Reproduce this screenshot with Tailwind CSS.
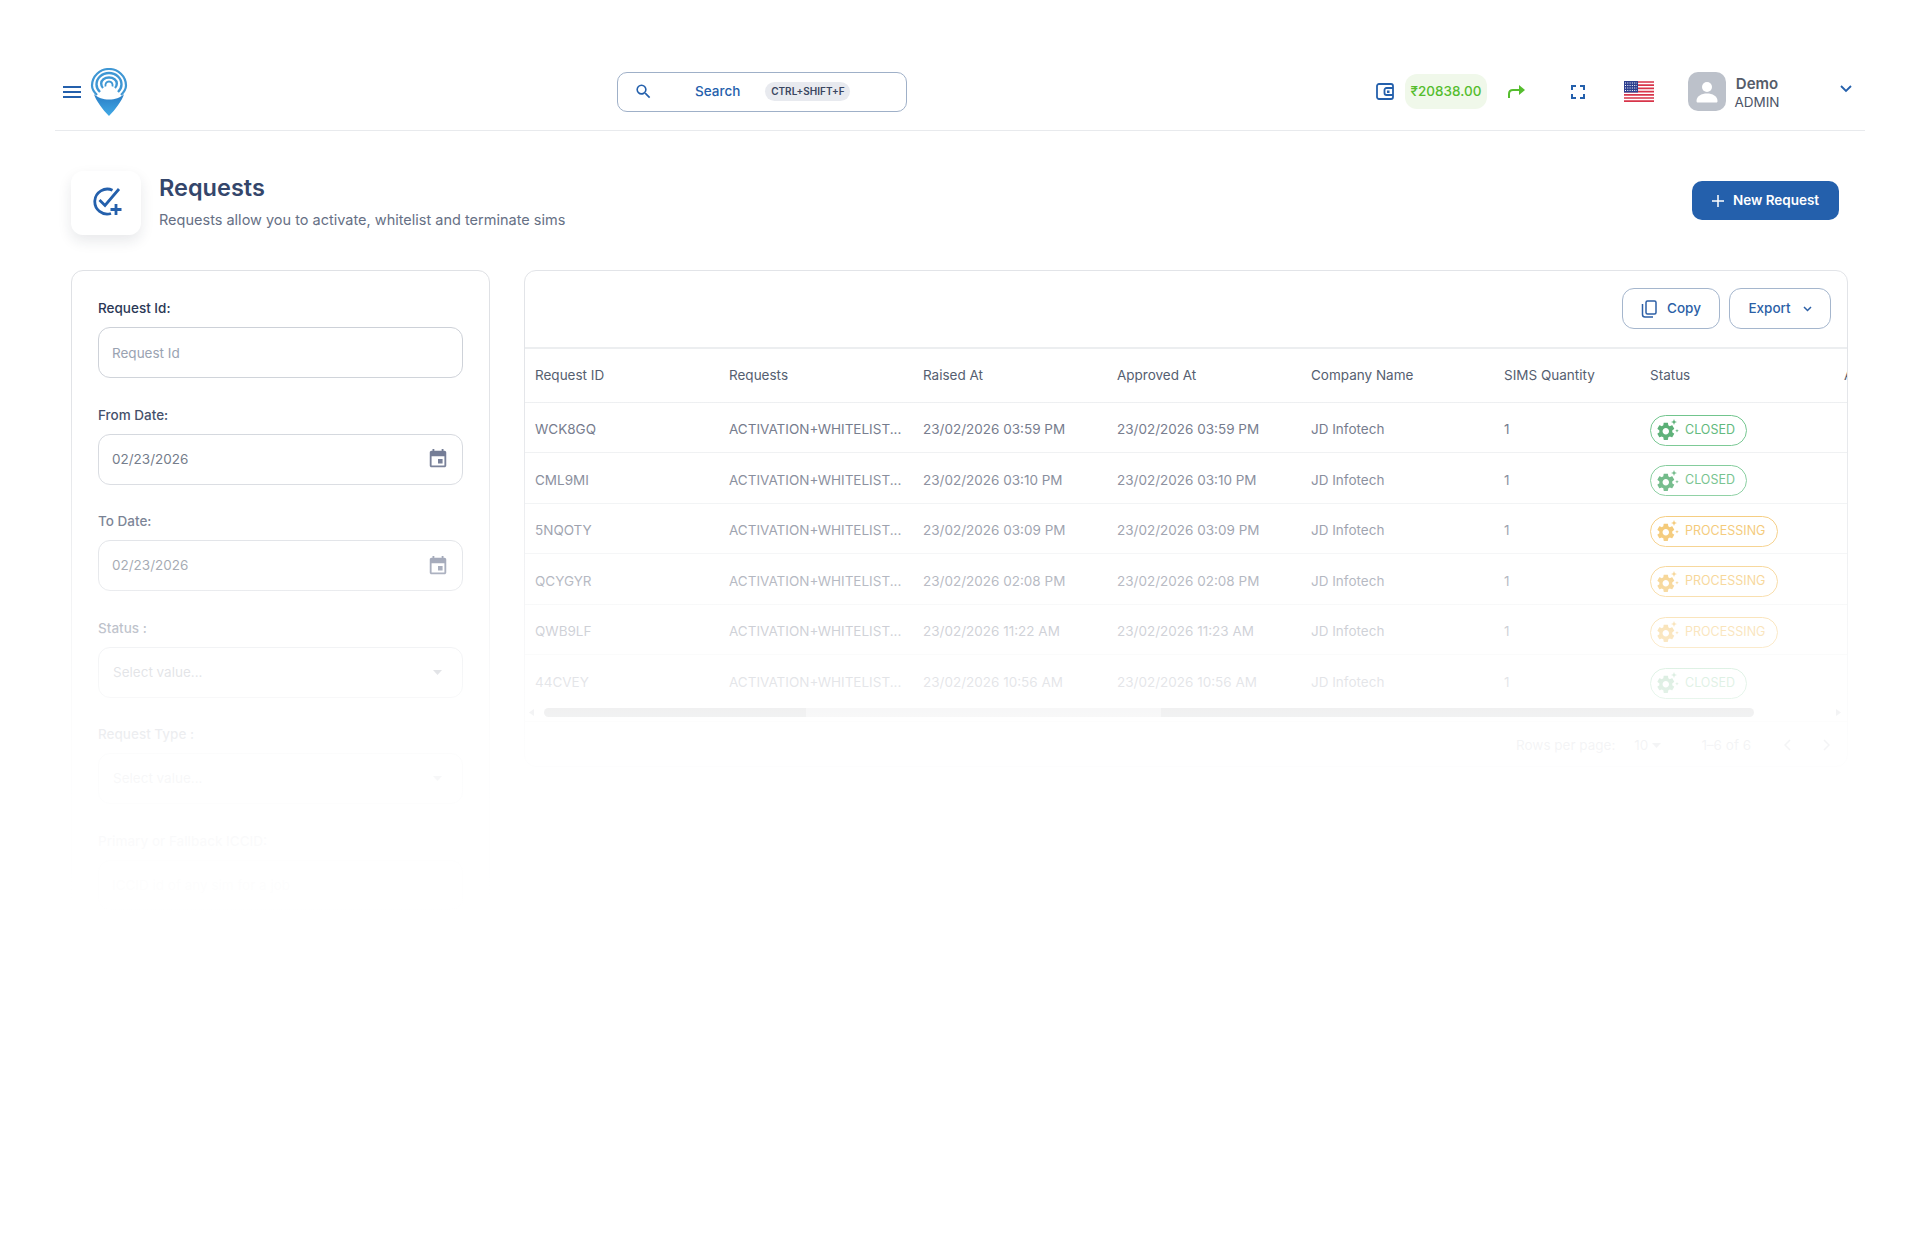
<!DOCTYPE html>
<html lang="en">
<head>
    <meta charset="UTF-8">
    <meta name="viewport" content="width=device-width, initial-scale=1.0">
    <title>Requests</title>
    <script src="https://cdn.jsdelivr.net/npm/@tailwindcss/browser@4"></script>
</head>
<body class="bg-white [font-family:Inter,sans-serif]">
    <svg class="hidden">
        <symbol id="gear" viewBox="0 0 24 24">
            <g transform="translate(0 2.500) scale(0.9)">
                <path fill="currentColor" d="M19.14 12.94c.04-.3.06-.61.06-.94 0-.32-.02-.64-.07-.94l2.03-1.58c.18-.14.23-.41.12-.61l-1.92-3.32c-.12-.22-.37-.29-.59-.22l-2.39.96c-.5-.38-1.03-.7-1.62-.94l-.36-2.54c-.04-.24-.24-.41-.48-.41h-3.84c-.24 0-.43.17-.47.41l-.36 2.54c-.59.24-1.13.57-1.62.94l-2.39-.96c-.22-.08-.47 0-.59.22L2.74 8.87c-.12.21-.08.47.12.61l2.03 1.58c-.05.3-.09.63-.09.94s.02.64.07.94l-2.03 1.58c-.18.14-.23.41-.12.61l1.92 3.32c.12.22.37.29.59.22l2.39-.96c.5.38 1.03.7 1.62.94l.36 2.54c.05.24.24.41.48.41h3.84c.24 0 .44-.17.47-.41l.36-2.54c.59-.24 1.13-.56 1.62-.94l2.39.96c.22.08.47 0 .59-.22l1.92-3.32c.12-.22.07-.47-.12-.61l-2.01-1.58zM12 15.6c-1.98 0-3.6-1.62-3.6-3.6s1.62-3.6 3.6-3.6 3.6 1.62 3.6 3.6-1.62 3.6-3.6 3.6z"/>
            </g>
            <path fill="currentColor" d="M19 1l.8 2.2L22 4l-2.2.8L19 7l-.8-2.2L16 4l2.2-.8zM22 11l.5 1.3 1.3.5-1.3.5L22 14.6l-.5-1.3-1.3-.5 1.3-.5z"/>
        </symbol>
        <symbol id="calendar" viewBox="0 0 24 24">
            <path fill="currentColor" d="M17 12h-5v5h5v-5zM16 1v2H8V1H6v2H5c-1.11 0-1.99.9-1.99 2L3 19c0 1.1.89 2 2 2h14c1.1 0 2-.9 2-2V5c0-1.1-.9-2-2-2h-1V1h-2zm3 18H5V9h14v10z"/>
        </symbol>
    </svg>

    <div class="relative w-[1920px] h-[1250px] overflow-hidden pt-[50px]">
        <!-- Top bar -->
        <header class="mx-[55px] h-[81px] pt-[3px] border-b border-[#e8eaed] flex items-center text-[#2460ac]">
            <svg class="ml-[8px] w-[18px] h-[14px]" viewBox="0 0 18 14"><path fill="none" stroke="currentColor" stroke-width="2" d="M0 2h18M0 7h18M0 12h18"/></svg>
            <svg class="ml-[9px] w-[38px] h-[48px]" viewBox="0 0 38 48">
                <defs>
                    <linearGradient id="pin" x1="0" y1="0" x2="0" y2="1">
                        <stop offset="0" stop-color="#2a7cc4"/>
                        <stop offset="1" stop-color="#42aae6"/>
                    </linearGradient>
                </defs>
                <g fill="none" stroke="#3f97d4">
                    <path stroke-width="2.2" d="M7 27C3 23 2 20 2 17.500 2 8 10 1 19 1s17 7 17 16.500c0 2.500-1 5.500-5 9.500"/>
                    <path stroke-width="2.4" d="M10 24c-2-2-3.500-4.500-3.500-7.500C6.500 10 12 5 19 5s12.500 5 12.500 11.500c0 3-1.500 5.500-3.500 7.500"/>
                    <path stroke-width="2.4" d="M13 20c-1-1-1.800-2.500-1.800-4.500C11.200 12 14.500 9.500 19 9.500s7.800 2.500 7.800 6c0 2-.8 3.500-1.800 4.500"/>
                    <path stroke-width="1.800" d="M15.500 18.500c-.5-3 1-5 3.500-5s4 2 3.500 5"/>
                </g>
                <path fill="url(#pin)" d="M4 26c4 4 9 5.500 15 5.500S30 30 34 26c-1.500 6-9 16-15 22C13 42 5.500 32 4 26z"/>
            </svg>

            <div class="ml-[489px] w-[290px] h-[40px] rounded-[10px] border border-[#9fb0c8] flex items-center">
                <svg class="ml-[16px] w-[19px] h-[19px]" viewBox="0 0 24 24"><path fill="currentColor" d="M15.500 14h-.79l-.28-.27A6.470 6.470 0 0 0 16 9.500 6.500 6.500 0 1 0 9.500 16c1.610 0 3.090-.59 4.230-1.570l.27.28v.79l5 4.990L20.490 19l-4.990-5zm-6 0C7.010 14 5 11.990 5 9.500S7.010 5 9.500 5 14 7.010 14 9.500 11.990 14 9.500 14z"/></svg>
                <span class="ml-[42px] text-[13.500px] font-medium">Search</span>
                <span class="ml-[25px] w-[85px] h-[19px] rounded-full bg-[#e8eaef] text-[#3a4660] text-[10px] font-semibold flex items-center justify-center">CTRL+SHIFT+F</span>
            </div>

            <svg class="ml-[469px] w-[18px] h-[17px]" viewBox="0 0 18 17"><path fill="none" stroke="currentColor" stroke-width="1.800" d="M3 1h12a2 2 0 0 1 2 2v11a2 2 0 0 1-2 2H3a2 2 0 0 1-2-2V3a2 2 0 0 1 2-2zM17 5h-6.500a2 2 0 0 0-2 2v3a2 2 0 0 0 2 2H17"/><rect x="11" y="7.500" width="2.500" height="2.500" fill="currentColor"/></svg>
            <div class="ml-[11px] w-[82px] h-[35px] rounded-[12px] bg-[#f0f8ea] text-[#55bd2e] text-[13.500px] font-medium flex items-center justify-center">₹20838.00</div>
            <svg class="ml-[21px] w-[17px] h-[13px]" viewBox="0 0 17 13"><path fill="none" stroke="#55bd2e" stroke-width="2" d="M1 13V9c0-3 1.500-4 4-4h8"/><path fill="#55bd2e" d="M11 0l6 5-6 5z"/></svg>
            <svg class="ml-[46px] w-[14px] h-[14px]" viewBox="0 0 14 14"><path fill="none" stroke="currentColor" stroke-width="2" d="M1 5V1h4M9 1h4v4M13 9v4H9M5 13H1V9"/></svg>
            <svg class="ml-[39px] w-[30px] h-[21px]" viewBox="0 0 30 21">
                <rect width="30" height="21" fill="#fff"/>
                <path stroke="#d8354a" stroke-width="1.700" d="M0 1h30M0 4.200h30M0 7.400h30M0 10.600h30M0 13.800h30M0 17h30M0 20.200h30"/>
                <rect width="14" height="11.500" fill="#2d3f8f"/>
                <path stroke="#fff" stroke-width="1" stroke-dasharray="1 1.300" d="M1 2h12M1 4.500h12M1 7h12M1 9.500h12"/>
            </svg>
            <div class="ml-[34px] w-[38px] h-[39px] rounded-[10px] bg-[#bcc1ca] flex items-center justify-center">
                <svg class="w-[24px] h-[24px]" viewBox="0 0 24 24"><circle cx="12" cy="7" r="5" fill="#fff"/><path fill="#fff" d="M1.500 21c0-5 5-7.500 10.500-7.500S22.500 16 22.500 21c0 1-.5 1.500-1.500 1.500H3c-1 0-1.500-.5-1.500-1.500z"/></svg>
            </div>
            <div class="ml-[8px] mt-[2.500px] w-[46px] text-center leading-[18px]">
                <div class="text-[15px] font-semibold text-[#555c6a]">Demo</div>
                <div class="text-[13.500px] text-[#4c5466]">ADMIN</div>
            </div>
            <svg class="ml-[60px] mb-[6px] w-[12px] h-[8px]" viewBox="0 0 12 8"><path fill="none" stroke="currentColor" stroke-width="1.800" d="M1 1l5 5 5-5"/></svg>
        </header>

        <main class="mx-[71px] w-[1777px]">
            <!-- Page heading -->
            <div class="mt-[40px] h-[64px] flex items-center">
                <div class="w-[70px] h-[64px] rounded-xl bg-white shadow-[0_6px_14px_rgba(30,40,60,0.1)] flex items-center justify-center">
                    <svg class="ml-[2px] mb-[4px] w-[31px] h-[29px]" viewBox="0 0 31 29" fill="none" stroke="#2460ac" stroke-width="2.800">
                        <path d="M20.500 3.200A12.500 12.500 0 1 0 19 26.500"/>
                        <path d="M7.500 13l5.500 5.500L27 2"/>
                        <path d="M18.500 22.500h11M24 17v11"/>
                    </svg>
                </div>
                <div class="ml-[18px] -mt-[4px]">
                    <h1 class="text-[23.500px] leading-[32px] font-semibold text-[#34466b]">Requests</h1>
                    <p class="mt-[5px] text-[14.500px] leading-[22px] text-[#667085]">Requests allow you to activate, whitelist and terminate sims</p>
                </div>
                <button class="ml-auto mr-[9px] mb-[5px] w-[147px] h-[39px] rounded-[10px] bg-[#2460ac] text-white text-[13.500px] font-semibold flex items-center justify-center gap-[9px]">
                    <svg class="w-[12px] h-[12px]" viewBox="0 0 12 12"><path stroke="#fff" stroke-width="1.500" d="M6 0v12M0 6h12"/></svg>
                    New Request
                </button>
            </div>

            <div class="mt-[35px] flex gap-[34px] items-start">
                <!-- Filters -->
                <aside class="w-[419px] h-[680px] rounded-xl border border-[#dfe1e5] pt-[27px] px-[26px]">
                    <label class="block text-[13.500px] leading-[20px] font-medium text-[#2b3856] mb-[9px]">Request Id:</label>
                    <input type="text" placeholder="Request Id" class="w-full h-[51px] rounded-xl border border-[#cdd1d8] px-[13px] text-[13.500px] placeholder:text-[#98a1b0] mb-[26.500px]">

                    <label class="block text-[13.500px] leading-[20px] font-medium text-[#2b3856] mb-[9px]">From Date:</label>
                    <div class="h-[51px] rounded-xl border border-[#cdd1d8] px-[13px] text-[13.500px] text-[#4b5568] flex items-center justify-between mb-[26.500px]">
                        <span>02/23/2026</span>
                        <svg class="w-[22px] h-[22px] text-[#4f5a7a]"><use href="#calendar"/></svg>
                    </div>

                    <label class="block text-[13.500px] leading-[20px] font-medium text-[#2b3856] mb-[9px]">To Date:</label>
                    <div class="h-[51px] rounded-xl border border-[#cdd1d8] px-[13px] text-[13.500px] text-[#4b5568] flex items-center justify-between mb-[26.500px]">
                        <span>02/23/2026</span>
                        <svg class="w-[22px] h-[22px] text-[#4f5a7a]"><use href="#calendar"/></svg>
                    </div>

                    <label class="block text-[13.500px] leading-[20px] font-medium text-[#2b3856] mb-[9px]">Status :</label>
                    <div class="h-[51px] rounded-xl border border-[#cdd1d8] px-[14px] text-[13.500px] text-[#6b7384] flex items-center justify-between mb-[26.500px]">
                        <span>Select value...</span>
                        <svg class="w-[9px] h-[5px] mr-[6px]" viewBox="0 0 9 5"><path fill="#6b7384" d="M0 0h9L4.500 5z"/></svg>
                    </div>

                    <label class="block text-[13.500px] leading-[20px] font-medium text-[#2b3856] mb-[9px]">Request Type :</label>
                    <div class="h-[51px] rounded-xl border border-[#cdd1d8] px-[14px] text-[13.500px] text-[#6b7384] flex items-center justify-between mb-[26.500px]">
                        <span>Select value...</span>
                        <svg class="w-[9px] h-[5px] mr-[6px]" viewBox="0 0 9 5"><path fill="#6b7384" d="M0 0h9L4.500 5z"/></svg>
                    </div>

                    <label class="block text-[13.500px] leading-[20px] font-medium text-[#2b3856] mb-[9px]">Primary or Fallback ICCID:</label>
                    <input type="text" placeholder="ICCID id of any sim for a job" class="w-full h-[50px] rounded-xl border border-[#cdd1d8] px-[13px] text-[13.500px] placeholder:text-[#6b7384]">
                </aside>

                <!-- Table card -->
                <section class="w-[1324px] h-[497px] rounded-xl border border-[#e2e4e8] overflow-hidden">
                    <div class="h-[78px] pb-[1px] border-b-2 border-[#eceef0] flex items-center justify-end gap-[9px] pr-[16px]">
                        <button class="w-[98px] h-[41px] rounded-[12px] border border-[#a5b6cd] text-[#2c5fa6] text-[13.500px] font-medium flex items-center justify-center gap-[10px]">
                            <svg class="w-[16px] h-[18px]" viewBox="0 0 16 18" fill="none" stroke="currentColor" stroke-width="1.500"><rect x="5" y="1" width="10" height="13" rx="1.500"/><path d="M1.500 4v10.500a2.500 2.500 0 0 0 2.500 2.500h8"/></svg>
                            Copy
                        </button>
                        <button class="w-[102px] h-[41px] rounded-[12px] border border-[#a5b6cd] text-[#2c5fa6] text-[13.500px] font-medium flex items-center justify-center gap-[12px]">
                            Export
                            <svg class="w-[9px] h-[6px]" viewBox="0 0 9 6"><path fill="none" stroke="currentColor" stroke-width="1.500" d="M1 1l3.500 3.500L8 1"/></svg>
                        </button>
                    </div>

                    <div class="overflow-hidden">
                        <table class="table-fixed w-[1519px] text-left text-[13.500px] text-[#5d6579]">
                            <colgroup>
                                <col class="w-[194px]"><col class="w-[194px]"><col class="w-[194px]"><col class="w-[194px]"><col class="w-[193px]"><col class="w-[146px]"><col class="w-[194px]"><col class="w-[210px]">
                            </colgroup>
                            <thead class="text-[#4b5568]">
                                <tr class="h-[53px] border-b border-[#eceef0] [&>th]:pl-[10px] [&>th]:pb-[1px] [&>th]:font-normal">
                                    <th>Request ID</th><th>Requests</th><th>Raised At</th><th>Approved At</th><th>Company Name</th><th>SIMS Quantity</th><th>Status</th><th>Actions</th>
                                </tr>
                            </thead>
                            <tbody class="[&_td]:pl-[10px] [&_td]:pt-[4px] [&_tr]:h-[50.500px] [&_tr]:border-b [&_tr]:border-[#eceef0]">
                                <tr>
                                    <td>WCK8GQ</td><td>ACTIVATION+WHITELIST...</td><td>23/02/2026 03:59 PM</td><td>23/02/2026 03:59 PM</td><td>JD Infotech</td><td>1</td>
                                    <td><span class="inline-flex align-middle items-center mt-[2px] h-[31px] pl-[4px] w-[97px] rounded-full border-[1.500px] border-[#5dbd7d] text-[#45ad66] text-[12.500px]"><svg class="w-[24px] h-[24px] mr-[6px] text-[#3fa25f]"><use href="#gear"/></svg>CLOSED</span></td><td></td>
                                </tr>
                                <tr>
                                    <td>CML9MI</td><td>ACTIVATION+WHITELIST...</td><td>23/02/2026 03:10 PM</td><td>23/02/2026 03:10 PM</td><td>JD Infotech</td><td>1</td>
                                    <td><span class="inline-flex align-middle items-center mt-[2px] h-[31px] pl-[4px] w-[97px] rounded-full border-[1.500px] border-[#5dbd7d] text-[#45ad66] text-[12.500px]"><svg class="w-[24px] h-[24px] mr-[6px] text-[#3fa25f]"><use href="#gear"/></svg>CLOSED</span></td><td></td>
                                </tr>
                                <tr>
                                    <td>5NQOTY</td><td>ACTIVATION+WHITELIST...</td><td>23/02/2026 03:09 PM</td><td>23/02/2026 03:09 PM</td><td>JD Infotech</td><td>1</td>
                                    <td><span class="inline-flex align-middle items-center mt-[2px] h-[31px] pl-[4px] w-[128px] rounded-full border-[1.500px] border-[#f0b13a] text-[#eda822] text-[12.500px]"><svg class="w-[24px] h-[24px] mr-[6px]"><use href="#gear"/></svg>PROCESSING</span></td><td></td>
                                </tr>
                                <tr>
                                    <td>QCYGYR</td><td>ACTIVATION+WHITELIST...</td><td>23/02/2026 02:08 PM</td><td>23/02/2026 02:08 PM</td><td>JD Infotech</td><td>1</td>
                                    <td><span class="inline-flex align-middle items-center mt-[2px] h-[31px] pl-[4px] w-[128px] rounded-full border-[1.500px] border-[#f0b13a] text-[#eda822] text-[12.500px]"><svg class="w-[24px] h-[24px] mr-[6px]"><use href="#gear"/></svg>PROCESSING</span></td><td></td>
                                </tr>
                                <tr>
                                    <td>QWB9LF</td><td>ACTIVATION+WHITELIST...</td><td>23/02/2026 11:22 AM</td><td>23/02/2026 11:23 AM</td><td>JD Infotech</td><td>1</td>
                                    <td><span class="inline-flex align-middle items-center mt-[2px] h-[31px] pl-[4px] w-[128px] rounded-full border-[1.500px] border-[#f0b13a] text-[#eda822] text-[12.500px]"><svg class="w-[24px] h-[24px] mr-[6px]"><use href="#gear"/></svg>PROCESSING</span></td><td></td>
                                </tr>
                                <tr class="!border-b-0">
                                    <td>44CVEY</td><td>ACTIVATION+WHITELIST...</td><td>23/02/2026 10:56 AM</td><td>23/02/2026 10:56 AM</td><td>JD Infotech</td><td>1</td>
                                    <td><span class="inline-flex align-middle items-center mt-[2px] h-[31px] pl-[4px] w-[97px] rounded-full border-[1.500px] border-[#5dbd7d] text-[#45ad66] text-[12.500px]"><svg class="w-[24px] h-[24px] mr-[6px] text-[#3fa25f]"><use href="#gear"/></svg>CLOSED</span></td><td></td>
                                </tr>
                            </tbody>
                        </table>
                    </div>

                    <!-- Scrollbar -->
                    <div class="h-[17px] border-b border-[#eceef0] flex items-start pt-[3px] pl-[4px] pr-[6px]">
                        <svg class="mt-[1px] w-[5px] h-[7px]" viewBox="0 0 5 7"><path fill="#9aa0aa" d="M5 0v7L0 3.500z"/></svg>
                        <div class="ml-[10px] w-[1210px] h-[9px] rounded-full overflow-hidden flex">
                            <div class="w-[262px] bg-[#8a8c90]"></div>
                            <div class="w-[355px] bg-[#c0c1c4]"></div>
                            <div class="w-[593px] bg-[#8a8c90]"></div>
                        </div>
                        <svg class="ml-auto mt-[1px] w-[5px] h-[7px]" viewBox="0 0 5 7"><path fill="#9aa0aa" d="M0 0v7l5-3.500z"/></svg>
                    </div>

                    <!-- Pagination -->
                    <div class="h-[46px] flex items-center text-[13.500px] text-[#5d6579] pl-[991px]">
                        <span>Rows per page:</span>
                        <span class="ml-[19px]">10</span>
                        <svg class="ml-[4px] w-[9px] h-[5px]" viewBox="0 0 9 5"><path fill="#5d6579" d="M0 0h9L4.500 5z"/></svg>
                        <span class="ml-[40px]">1–6 of 6</span>
                        <svg class="ml-[33px] w-[7px] h-[12px]" viewBox="0 0 7 12"><path fill="none" stroke="#5d6579" stroke-width="1.500" d="M6 1L1 6l5 5"/></svg>
                        <svg class="ml-[32px] w-[7px] h-[12px]" viewBox="0 0 7 12"><path fill="none" stroke="#5d6579" stroke-width="1.500" d="M1 1l5 5-5 5"/></svg>
                    </div>
                </section>
            </div>
        </main>

        <!-- Fade-out over the lower part of the page -->
        <div class="absolute inset-0 pointer-events-none bg-[linear-gradient(to_bottom,rgba(255,255,255,0)_340px,rgba(255,255,255,0.12)_415px,rgba(255,255,255,0.38)_521px,rgba(255,255,255,0.55)_580px,rgba(255,255,255,0.7)_630px,rgba(255,255,255,0.83)_681px,rgba(255,255,255,0.93)_745px,rgba(255,255,255,0.975)_842px,rgba(255,255,255,1)_950px)]"></div>
    </div>
</body>
</html>
